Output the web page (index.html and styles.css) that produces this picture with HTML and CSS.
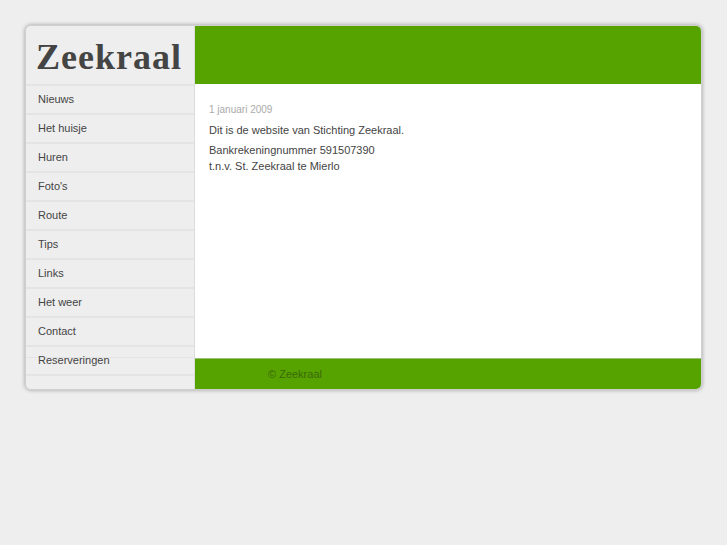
FILE: index.html
```html
<!DOCTYPE html>
<html lang="nl">
<head>
<meta charset="utf-8">
<title>Zeekraal</title>
<link rel="stylesheet" href="styles.css">
</head>
<body>
<div class="page">
  <aside class="sidebar">
    <div class="logo">Zeekraal</div>
    <ul class="nav">
      <li><a href="#">Nieuws</a></li>
      <li><a href="#">Het huisje</a></li>
      <li><a href="#">Huren</a></li>
      <li><a href="#">Foto's</a></li>
      <li><a href="#">Route</a></li>
      <li><a href="#">Tips</a></li>
      <li><a href="#">Links</a></li>
      <li><a href="#">Het weer</a></li>
      <li><a href="#">Contact</a></li>
      <li><a href="#">Reserveringen</a></li>
    </ul>
  </aside>
  <main class="main">
    <header class="header"></header>
    <section class="content">
      <p class="date">1 januari 2009</p>
      <p>Dit is de website van Stichting Zeekraal.</p>
      <p>Bankrekeningnummer 591507390<br>t.n.v. St. Zeekraal te Mierlo</p>
    </section>
    <footer class="footer">© Zeekraal</footer>
  </main>
</div>
</body>
</html>
```
FILE: styles.css
```css
html, body {
  margin: 0;
  padding: 0;
  background: #eeeeee;
}
body {
  padding: 25px;
  font-family: "Liberation Sans", Arial, sans-serif;
  font-size: 11px;
  color: #444;
}
.page {
  width: 675px;
  border: 1px solid #d0d0d0;
  border-radius: 6px;
  overflow: hidden;
  box-shadow: 0 0 4px rgba(0, 0, 0, 0.35);
  display: grid;
  grid-template-columns: 169px 1fr;
  background: #eee;
}
.sidebar {
  border-right: 1px solid #dcdcdc;
  background:
    linear-gradient(#e3e3e3, #e3e3e3) 0 331px / 100% 1px no-repeat,
    #eeeeee;
}
.logo {
  height: 58px;
  box-sizing: border-box;
  padding: 12px 0 0 10px;
  font-family: "Liberation Serif", "Times New Roman", serif;
  font-weight: bold;
  font-size: 36px;
  line-height: 38px;
  color: #444;
  letter-spacing: 1px;
}
.nav {
  list-style: none;
  margin: 0;
  padding: 0;
  border-top: 2px solid #e4e4e4;
  padding-bottom: 13px;
}
.nav li {
  height: 27px;
  border-bottom: 2px solid #e4e4e4;
}
.nav a {
  display: block;
  padding-left: 12px;
  line-height: 27px;
  color: #444;
  text-decoration: none;
}
.main {
  display: flex;
  flex-direction: column;
}
.header {
  height: 58px;
  background: #56a300;
}
.content {
  flex: 1;
  background: #fff;
  padding: 18px 14px 0 14px;
  color: #444;
}
.content p {
  margin: 0 0 4px 0;
  line-height: 16px;
}
.content p.date {
  font-size: 10px;
  color: #aaa;
  margin-bottom: 4px;
}
.footer {
  height: 30px;
  border-top: 1px solid #9ebd7a;
  background: #56a300;
  color: #3a6a0a;
  line-height: 31px;
  padding-left: 73px;
}
```
